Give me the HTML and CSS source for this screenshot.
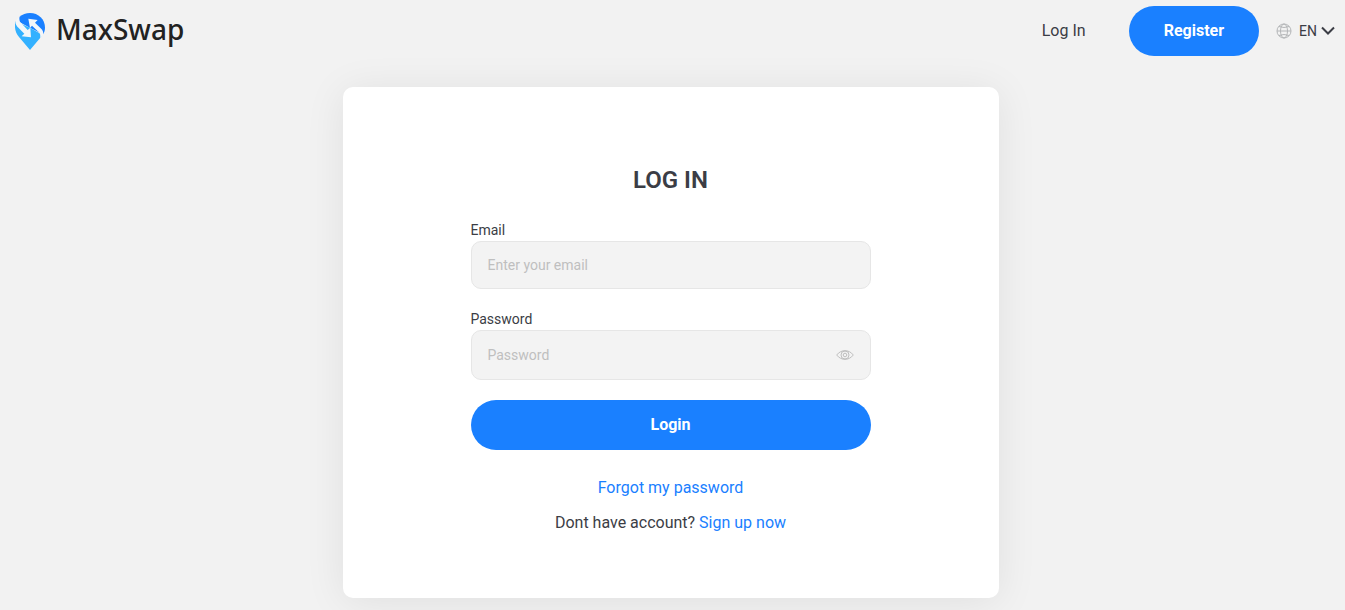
FILE: index.html
```html
<!DOCTYPE html>
<html lang="en">
<head>
<meta charset="utf-8">
<title>MaxSwap – Log In</title>
<link rel="stylesheet" href="styles.css">
</head>
<body>
<header class="header">
  <a class="brand" href="#">
    <svg class="brand-mark" viewBox="0 0 90 111" aria-hidden="true">
      <path fill="#1a80ff" d="M13 12C22 4 33 0 45 0c25 0 45 19 45 44 0 7-2 14-6 20L46 45 13 27z"/>
      <path fill="#33b1ff" d="M1 25L46 45 79 64c1 4 0 7-3 10L45 111 12 72C0 58-2 42 1 25z"/>
      <path fill="#f3f6f9" d="M1 25L13 11c-2 8 0 14 6 20l19 20 8-7 2 29-28-3 8-8L11 45C4 39 1 33 1 25z"/>
      <path fill="#f3f6f9" d="M40 17l28 4-8 8 17 17c7 6 9 13 7 19l-9 11c2-8 1-14-4-19L51 38l-6 7z"/>
    </svg>
    <span class="brand-name">MaxSwap</span>
  </a>
  <nav class="nav">
    <a class="nav-link" href="#">Log In</a>
    <a class="button register" href="#">Register</a>
    <button class="language" type="button">
      <svg class="globe" viewBox="0 0 16 16" aria-hidden="true"><circle cx="8" cy="8" r="7"/><ellipse cx="8" cy="8" rx="3.500" ry="7"/><path d="M1 8h14M3 3.500q5 2 10 0M3 12.500q5-2 10 0"/></svg>
      <span>EN</span>
      <svg class="chevron" viewBox="0 0 14 10" aria-hidden="true"><path d="M1 1.500l6 6 6-6"/></svg>
    </button>
  </nav>
</header>
<main class="main">
  <section class="card">
    <form class="form">
      <h1 class="title">LOG IN</h1>
      <label class="label" for="email">Email</label>
      <div class="field"><input class="input" id="email" type="email" placeholder="Enter your email"></div>
      <label class="label" for="password">Password</label>
      <div class="field field-password">
        <input class="input" id="password" type="password" placeholder="Password">
        <button class="reveal" type="button" aria-label="Show password">
          <svg class="eye" viewBox="0 0 18 12" aria-hidden="true"><path d="M.7 6C5 .2 13 .2 17.300 6 13 11.800 5 11.800.7 6z"/><circle cx="9" cy="6" r="4"/><circle cx="9" cy="6" r="1.800"/></svg>
        </button>
      </div>
      <button class="button submit" type="submit">Login</button>
      <a class="link forgot" href="#">Forgot my password</a>
      <p class="signup">Dont have account? <a class="link" href="#">Sign up now</a></p>
    </form>
  </section>
</main>
</body>
</html>
```
FILE: styles.css
```css
* { box-sizing: border-box; }
body {
  margin: 0;
  background: #f2f2f2;
  color: #3b3d45;
  font: 16px/24px Roboto, sans-serif;
}
a { text-decoration: none; }
button { border: 0; font-family: inherit; cursor: pointer; }
.header {
  display: flex;
  align-items: center;
  justify-content: space-between;
  padding: 6px 10px 6px 15px;
}
.brand { display: flex; align-items: center; gap: 11px; color: #222; }
.brand-mark { width: 30px; height: 37px; }
.brand-name { padding-bottom: 4px; font: 500 28px/34px "Noto Sans", sans-serif; }
.nav { display: flex; align-items: center; }
.nav-link { margin-right: 43px; color: #3b3d45; }
.button {
  border-radius: 25px;
  background: #1a80ff;
  color: #fff;
  font-size: 16px;
  font-weight: 700;
  line-height: 50px;
  text-align: center;
}
.register { padding: 0 35px; }
.language {
  display: flex;
  align-items: center;
  margin-left: 17px;
  padding: 0;
  background: none;
  color: #3b3d45;
  font-size: 14px;
}
.globe { width: 16px; height: 16px; margin-right: 7px; fill: none; stroke: #b4b6b8; }
.chevron { width: 14px; height: 10px; margin-left: 4px; fill: none; stroke: #3b3d45; stroke-width: 2; }
.main { padding: 25px 4px 12px 0; }
.card {
  max-width: 656px;
  margin: 0 auto;
  padding: 77px 24px 63px;
  border-radius: 10px;
  background: #fff;
  box-shadow: 0 4px 40px rgba(0, 0, 0, 0.08);
}
.form { display: flex; flex-direction: column; max-width: 400px; margin: 0 auto; }
.title { margin: 0 0 24px; font-size: 24px; font-weight: 600; line-height: 32px; text-align: center; }
.label { font-size: 14px; line-height: 21px; }
.field { margin-bottom: 20px; }
.input {
  display: block;
  width: 100%;
  height: 48px;
  padding: 0 16px;
  border: 1px solid #e6e6e6;
  border-radius: 10px;
  background: #f3f3f3;
  color: #3b3d45;
  font: 14px/20px Roboto, sans-serif;
}
.input::placeholder { color: #bfbfbf; }
.field-password { position: relative; }
.field-password .input { height: 50px; padding-right: 48px; }
.reveal {
  position: absolute;
  top: 0;
  right: 0;
  display: flex;
  align-items: center;
  height: 100%;
  padding: 0 17px;
  background: none;
}
.eye { width: 18px; height: 12px; fill: none; stroke: #bfbfbf; }
.submit { padding: 0; }
.link { color: #1a80ff; }
.forgot { margin-top: 26px; text-align: center; }
.signup { margin: 11px 0 0; text-align: center; }
```
